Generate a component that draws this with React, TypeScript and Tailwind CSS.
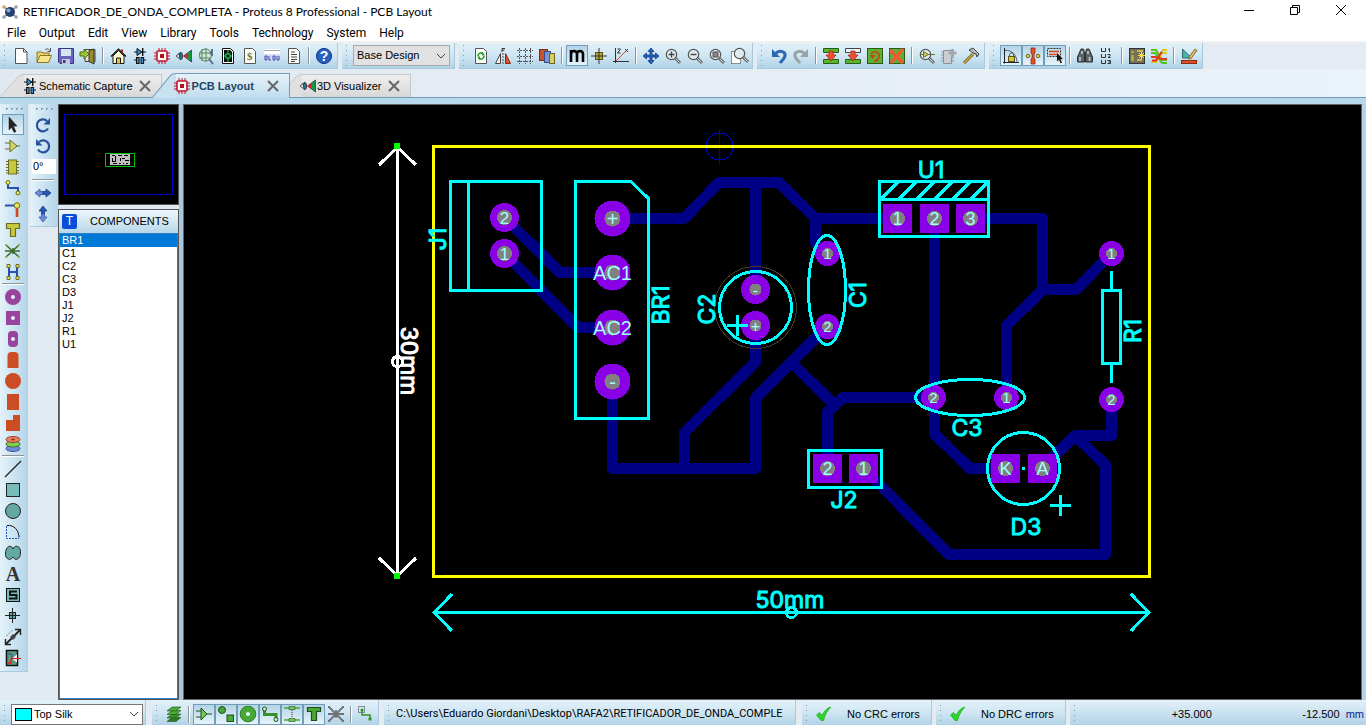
import type { ReactNode } from "react";

const lens = (
  <>
    <path d="M10 10l5 5" stroke="#6b6b6b" strokeWidth="3" />
    <path d="M10 10l4.5 4.5" stroke="#d8d8d8" strokeWidth="1" />
    <circle cx="6.5" cy="6.5" r="5.2" fill="#dfeaf2" stroke="#555" strokeWidth="1.2" />
  </>
);

const chip = (
  <>
    <path d="M5 0v16M8 0v16M11 0v16M0 5h16M0 8h16M0 11h16" stroke="#b81424" strokeWidth="1" />
    <rect x="3" y="3" width="10" height="10" rx="1" fill="#fff" stroke="#c4162a" strokeWidth="1.6" />
    <rect x="6" y="6" width="4" height="4" fill="#b0101f" />
  </>
);

const diode = (
  <>
    <path d="M2 4h12M2 12h3M11 12h3" stroke="#111" strokeWidth="1.2" />
    <path d="M5 0.5l5 3.5-5 3.5z" fill="#2f8fd0" stroke="#111" />
    <path d="M10.7 0v8" stroke="#111" strokeWidth="1.4" />
    <rect x="4.5" y="9.5" width="2.6" height="6" fill="#2f8fd0" stroke="#111" />
    <rect x="9" y="9.5" width="2.6" height="6" fill="#2f8fd0" stroke="#111" />
  </>
);

const eye = (
  <>
    <path d="M0 8l5-4M0 8l5 4M2 5l4 6" stroke="#555" strokeWidth="1" fill="none" />
    <ellipse cx="5" cy="8" rx="1.5" ry="3.4" fill="#2c7a9c" stroke="#222" strokeWidth="0.8" />
    <path d="M7.5 8l8-6v12z" fill="#149a3c" stroke="#115" strokeWidth="0.6" />
    <path d="M7.5 8l4-3v6z" fill="#d8212c" />
  </>
);

const page = <path d="M2.5 0.5h8l3 3v12h-11z" fill="#fcfcf8" stroke="#555" />;

const icons: Record<string, ReactNode> = {
  new: (
    <>
      <path d="M1.5 0.500h8l3.500 3.500v11.500h-11.500z" fill="#fdfdfd" stroke="#555" />
      <path d="M9.5 0.500v3.500h3.500" fill="none" stroke="#555" />
    </>
  ),
  open: (
    <>
      <path d="M1 14V4h5l1 1h6v3" fill="#e8d26a" stroke="#8a7420" />
      <path d="M1 14.5l3-7h11.5l-3 7z" fill="#f4e48c" stroke="#8a7420" />
      <path d="M9 2c2-2 4-1 5 1M14.500 0v3.500h-3" fill="none" stroke="#555" />
    </>
  ),
  save: (
    <>
      <path d="M0.500 0.500h15v15H2l-1.500-1.500z" fill="#6a64c0" stroke="#3b3684" />
      <rect x="3" y="1" width="10" height="7" fill="#d5e6ee" />
      <rect x="4" y="11" width="8" height="5" fill="#c6c6dc" />
      <rect x="5" y="12" width="2.500" height="3" fill="#3b3684" />
    </>
  ),
  exit: (
    <>
      <path d="M5 1.500h10v12H5z" fill="#e8e4c8" stroke="#444" />
      <path d="M9 2.500l5-1.500v15l-5-2.500z" fill="#9a8a2a" stroke="#333" />
      <path d="M0 4h4V1l5 5-5 5V8H0z" fill="#9ac73a" stroke="#4a6b14" />
    </>
  ),
  home: (
    <>
      <path d="M3 8v7.500h11V8L8.500 2.500z" fill="#fffbd0" stroke="#111" />
      <path d="M1 8.500L8.500 1 16 8.500" fill="none" stroke="#111" strokeWidth="1.200" />
      <path d="M12 1.500v3" stroke="#c01818" strokeWidth="2" />
      <path d="M6.500 15.500V10h4v5.500" fill="#f2c230" stroke="#111" />
    </>
  ),
  diode,
  chip,
  eye,
  gerber: (
    <>
      <circle cx="7.500" cy="7" r="6" fill="#cfe6d2" stroke="#5f7f68" />
      <path d="M4 1v12M8 0v14M1 5h13M1 10h12" stroke="#5b8a66" />
      <path d="M11 11l4 5M12 6l2-3M14 8V1" stroke="#4d6b8a" strokeWidth="1.800" />
    </>
  ),
  green: (
    <>
      <path d="M2.500 0.500h8l3 3v12h-11z" fill="#fff" stroke="#111" />
      <path d="M4 2h6l2 2v10H4z" fill="#111" />
      <path d="M8 2v12M4 8h8" stroke="#15e060" />
      <rect x="6" y="6" width="4" height="4" fill="#111" stroke="#15e060" />
    </>
  ),
  bill: (
    <>
      {page}
      <text x="5" y="12" fontSize="11" fontWeight="700" fontFamily="Liberation Serif, serif" fill="#857418">$</text>
    </>
  ),
  hex: (
    <>
      <rect x="0" y="1" width="16" height="5" fill="#fff" />
      <path d="M0 2.500h16" stroke="#9ab" />
      <rect x="0" y="6" width="16" height="7" fill="#d4dcf8" />
      <path d="M1 8h2v4h-2zM5 8v4h2M9 12V8h2v4zM13 8v4h2v-4" fill="none" stroke="#3a48a8" />
    </>
  ),
  doc: (
    <>
      {page}
      <path d="M5 4h4M5 6.500h6M5 9h6M5 11.500h6M5 13.500h4" stroke="#444" />
    </>
  ),
  help: (
    <>
      <circle cx="8" cy="8" r="7.600" fill="#2a5dc2" stroke="#173a86" />
      <text x="8" y="13" fontSize="14" fontWeight="700" textAnchor="middle" fontFamily="Liberation Sans, sans-serif" fill="#fff">?</text>
    </>
  ),
  refresh: (
    <>
      {page}
      <path d="M5 8c0-3 3-4 5-2M11 8c0 3-3 4-5 2" fill="none" stroke="#23a02e" strokeWidth="1.600" />
      <path d="M9 3.500v4h3zM7 12.500v-4H4z" fill="#23a02e" />
    </>
  ),
  mirror: (
    <>
      <path d="M0.500 15.500h5v-10z" fill="#f4f4f4" stroke="#444" />
      <path d="M15.500 15.500h-5v-10z" fill="#e05028" stroke="#8c2c10" />
      <path d="M8 5v11" stroke="#555" strokeDasharray="2 1" />
      <path d="M7 4V0.500h3M7 2.200h2.500" fill="none" stroke="#333" />
    </>
  ),
  grid: <path d="M0 2.500h16M0 8.500h16M0 13.500h16M2.500 0v16M8.500 0v16M13.500 0v16" stroke="#555" strokeDasharray="2 1" />,
  layers: (
    <>
      <rect x="0.500" y="1.500" width="8" height="11" fill="#c8542e" stroke="#703018" />
      <rect x="5.500" y="3.500" width="6" height="11" fill="#7a94dc" stroke="#38488c" />
      <rect x="10.500" y="5.500" width="5" height="10" fill="#dcd05c" stroke="#6c6420" />
    </>
  ),
  metric: <path d="M2 14V2M2 6c0-4 6-4 6 0v8M8 6c0-4 6-4 6 0v8" fill="none" stroke="#000" strokeWidth="2.600" />,
  origin: (
    <>
      <path d="M8 0v16M0 8h16" stroke="#333" />
      <rect x="4.500" y="4.500" width="7" height="7" fill="#b8a82c" stroke="#5c5410" />
      <path d="M8 4v8M4 8h8" stroke="#333" />
    </>
  ),
  axes: (
    <>
      <path d="M2.500 0v15M0 13.500h16" stroke="#333" />
      <path d="M3 13l9-9" stroke="#d8481c" />
      <path d="M4.500 1h3l-3 4h3M12 1l3 3M15 1l-3 3" fill="none" stroke="#333" />
    </>
  ),
  pan: <path d="M8 0l3 3.500H9v3.500h3.500V5L16 8l-3.500 3V9H9v3.500h2L8 16l-3-3.500h2V9H3.500v2L0 8l3.500-3v2H7V3.500H5z" fill="#2463c4" stroke="#123c80" strokeWidth="0.800" />,
  zoomIn: <>{lens}<path d="M3.500 6.500h6M6.500 3.500v6" stroke="#444" strokeWidth="1.400" /></>,
  zoomOut: <>{lens}<path d="M3.500 6.500h6" stroke="#444" strokeWidth="1.400" /></>,
  zoomAll: <>{lens}<rect x="4" y="4" width="5" height="5" fill="#888" stroke="#555" /></>,
  zoomArea: (
    <>
      <path d="M0.500 3.500h9v12h-9z" fill="#fff" stroke="#333" strokeDasharray="1 1" />
      <g transform="translate(2 -1)">{lens}</g>
    </>
  ),
  undo: (
    <>
      <path d="M4 6c5-5 11-2 10 2-.5 3-3 4-5 7" fill="none" stroke="#2a68b0" strokeWidth="3" />
      <path d="M1 1v8h8z" fill="#2a68b0" />
    </>
  ),
  redo: (
    <>
      <path d="M12 6C7 1 1 4 2 8c.500 3 3 4 5 7" fill="none" stroke="#9aa2a8" strokeWidth="3" />
      <path d="M15 1v8H7z" fill="#9aa2a8" />
    </>
  ),
  place: (
    <>
      <path d="M0.500 0.500h15v4h-15zM0.500 11.500h15v4h-15z" fill="#56b828" stroke="#2c5c18" />
      <path d="M6 3h4v4h3l-5 6-5-6h3z" fill="#ee5030" stroke="#a82810" strokeWidth="0.800" />
    </>
  ),
  move: (
    <>
      <path d="M0.500 0.500h15v4h-15z" fill="#e8f2f8" stroke="#444" />
      <path d="M0.500 11.500h15v4h-15z" fill="#56b828" stroke="#2c5c18" />
      <path d="M6 3h4v4h3l-5 6-5-6h3z" fill="#ee5030" stroke="#a82810" strokeWidth="0.800" />
    </>
  ),
  rotate: (
    <>
      <rect x="0.500" y="0.500" width="15" height="15" fill="#5fb030" stroke="#2c5c18" />
      <path d="M4 6c3-4 9-2 8 3-.500 3-3 4-5 4" fill="none" stroke="#c04818" strokeWidth="1.600" />
      <path d="M2.500 7l6 0-3 4z" fill="#c04818" />
    </>
  ),
  remove: (
    <>
      <rect x="0.500" y="0.500" width="15" height="15" fill="#5fb030" stroke="#2c5c18" />
      <path d="M1 2l13 13M14 1L2 15" stroke="#f05838" strokeWidth="3.400" />
    </>
  ),
  pick: (
    <>
      {lens}
      <path d="M1 6.500h4M9 6.500h7" stroke="#6c702c" />
      <path d="M4.500 3.500l5 3-5 3z" fill="#c8cc60" stroke="#6c702c" />
    </>
  ),
  newPkg: (
    <>
      <path d="M2.500 2.500h8v13h-8z" fill="#c8ced2" stroke="#8c9296" />
      <path d="M0 4h2M0 7h2M0 10h2M0 13h2M11 10h2M11 13h2" stroke="#8c9296" />
      <path d="M11.500 1v8M7.500 5h8" stroke="#a2a8ac" strokeWidth="3" />
    </>
  ),
  hammer: (
    <>
      <path d="M1 15L10 6" stroke="#6c5610" strokeWidth="3" />
      <path d="M1 15L10 6" stroke="#dcb840" strokeWidth="1.200" />
      <path d="M6 2l4-2 6 6-2 3-1-3-3-1z" fill="#b8bcc0" stroke="#444" />
    </>
  ),
  lock: (
    <>
      <path d="M1.500 0v15.500M0 14.500h16" stroke="#222" />
      <path d="M2 2.500c7-1 12 5 12 12" fill="none" stroke="#3a62a8" />
      <rect x="5.500" y="8.500" width="6" height="5" fill="#d4c440" stroke="#5c5410" />
      <path d="M6.500 8V6.500c0-2 4-2 4 0V8" fill="none" stroke="#5c5410" />
    </>
  ),
  neck: (
    <>
      <path d="M6 0h4v5l-1 1v4l1 1v5H6v-5l1-1V6L6 5z" fill="#e85028" stroke="#8c2c10" strokeWidth="0.800" />
      <circle cx="3" cy="8" r="1.800" fill="#dcd05c" stroke="#6c6420" />
      <circle cx="13" cy="8" r="1.800" fill="#dcd05c" stroke="#6c6420" />
    </>
  ),
  selTrack: (
    <>
      <path d="M0.500 0.500h13v8h-13z" fill="none" stroke="#333" strokeDasharray="2 1" />
      <path d="M2 3.500h10M2 6.500h8" stroke="#e04020" strokeWidth="1.600" />
      <path d="M10 5l6 6-2.500.200 1.500 3.500-1.500.600-1.500-3.500-2 1.700z" fill="#111" />
    </>
  ),
  find: (
    <>
      <path d="M4 1h2.500l1 4v9h-7V9zM12 1H9.500l-1 4v9h7V9z" fill="#5c6468" stroke="#2c3236" />
      <path d="M3 9v4M12.500 9v4M5 3v3M11 3v3" stroke="#c4ccd0" strokeWidth="1.600" />
    </>
  ),
  annotate: <path d="M2.500 0v3.500h4V0M9 1.500l1.500-1V4M2.500 6v3.500h4V6M8.500 6.500H11V8L9 9.500h2.500M2.500 12v3.500h4V12M8.500 12.500h3v3h-3M9.500 14h2" fill="none" stroke="#333" />,
  design: (
    <>
      <rect x="0.500" y="0.500" width="15" height="15" fill="#77705c" stroke="#333" />
      <path d="M3.500 3v2M3.500 7v6M8 3h6M8 12h5" stroke="#c8bc48" strokeWidth="2" />
      <path d="M12.500 4v7M9 7.500h7M10 5l5 5M15 5l-5 5" stroke="#f8e048" />
    </>
  ),
  route: (
    <>
      <path d="M0 2h5l6 10h5M0 5h4l7 10h5" fill="none" stroke="#58c020" strokeWidth="2" />
      <path d="M0 14h5l6-9h5M11 2h5" fill="none" stroke="#d8c820" strokeWidth="2" />
      <path d="M0 9h4l7 2h5M1 12.500h4l6-9" fill="none" stroke="#e03818" strokeWidth="2" />
    </>
  ),
  rules: (
    <>
      <path d="M1.500 1v9h9z" fill="#48b4a8" stroke="#2c6c68" />
      <path d="M8 9l6-8 2 1.500-6 8-2.500.500z" fill="#e0c060" stroke="#6c5020" strokeWidth="0.800" />
      <rect x="0.500" y="12.500" width="15" height="3" fill="#e05028" stroke="#8c2c10" />
    </>
  ),
  cursor: <path d="M4 0l8 9-3.500.300 2.500 5.200-2 1-2.500-5.200L4 13z" fill="#222" stroke="#222" strokeWidth="0.500" />,
  amp: (
    <>
      <path d="M0 5h5M0 11h5M11 8h4" stroke="#6c6c20" />
      <path d="M5 2l7 6-7 6z" fill="#d4d468" stroke="#6c6c20" />
    </>
  ),
  pkg: (
    <>
      <path d="M1 2.500h13M1 5.500h13M1 8.500h13M1 11.500h13M1 14h13" stroke="#6c6c20" />
      <rect x="3.500" y="1" width="8" height="14" fill="#c8c83c" stroke="#6c6c20" />
    </>
  ),
  track: (
    <>
      <path d="M3 3v5h10v5" fill="none" stroke="#2850b0" strokeWidth="2" />
      <circle cx="3" cy="2.500" r="2" fill="#e8e850" stroke="#6c6c20" />
      <circle cx="13" cy="13" r="2" fill="#e8e850" stroke="#6c6c20" />
    </>
  ),
  via: (
    <>
      <path d="M0 4.500h12" stroke="#2850b0" strokeWidth="2" />
      <path d="M12 6v10" stroke="#d04820" strokeWidth="2.600" />
      <circle cx="12" cy="4.500" r="2.800" fill="#e8e850" stroke="#6c6c20" />
    </>
  ),
  zone: <path d="M1.500 1.500h13v5h-4v8h-5v-8h-4z" fill="#c8c83c" stroke="#6c6c20" strokeWidth="1.200" />,
  rats: (
    <>
      <path d="M1 2l13 12M14 2L1 14M0 8h15M8 5v6" stroke="#3c6c28" strokeWidth="1.500" />
      <path d="M0 1h2v2H0zM13 1h2v2h-2zM0 13h2v2H0zM13 13h2v2h-2z" fill="#a0b030" />
    </>
  ),
  conn: (
    <>
      <path d="M4 3v10M4 8h8M12 3v10" fill="none" stroke="#2850b0" strokeWidth="2" />
      <path d="M2 0.500h3v3H2zM11 0.500h3v3h-3zM2 12.500h3v3H2zM11 12.500h3v3h-3z" fill="#e8e850" stroke="#6c6c20" />
    </>
  ),
  padRound: <><circle cx="8" cy="8" r="8" fill="#98449c" /><circle cx="8" cy="8" r="2" fill="#e4eef8" /></>,
  padSquare: <><rect x="1" y="1" width="14" height="14" fill="#98449c" /><circle cx="8" cy="8" r="2" fill="#e4eef8" /></>,
  padDil: <><rect x="3" y="0" width="10" height="16" rx="4" fill="#98449c" /><circle cx="8" cy="8" r="2" fill="#e4eef8" /></>,
  padEdge: <path d="M2.500 16V4q0-4 4-4h3q4 0 4 4v12z" fill="#cc4c24" />,
  padSmt: <circle cx="8" cy="8" r="8" fill="#cc4c24" />,
  padRect: <rect x="2" y="0" width="12" height="16" fill="#cc4c24" />,
  padPoly: <path d="M8 0h7v16H1V5h7z" fill="#cc4c24" />,
  stack: (
    <>
      <ellipse cx="8" cy="12.500" rx="7" ry="3" fill="#6c8ce0" stroke="#405090" />
      <ellipse cx="8" cy="8" rx="7" ry="3" fill="#80d050" stroke="#406c28" />
      <ellipse cx="8" cy="3.500" rx="7" ry="3" fill="#f08060" stroke="#904028" />
      <ellipse cx="8" cy="3.500" rx="2" ry="1" fill="#903018" />
    </>
  ),
  line: <path d="M0 16L16 0" stroke="#222" strokeWidth="1.300" />,
  box: <rect x="1.500" y="1.500" width="13" height="13" fill="#78bcb8" stroke="#222" />,
  circle: <circle cx="8" cy="8" r="7.500" fill="#64a8a4" stroke="#222" />,
  arc: (
    <>
      <path d="M1.500 2v12.500H14" fill="none" stroke="#1458c8" strokeDasharray="2 1" />
      <path d="M2 1.500c7-1 12 5 12 12" fill="none" stroke="#111" />
    </>
  ),
  path: <path d="M8 4c-2-5-7-3-7.500 4S6 16 8 12c2 4 7 3 7.500-4S10-1 8 4z" fill="#64a8a4" stroke="#222" />,
  text: <text x="8" y="14.500" fontSize="20" fontWeight="700" textAnchor="middle" fontFamily="Liberation Serif, serif" fill="#333">A</text>,
  symbol: (
    <>
      <rect x="1.500" y="1.500" width="13" height="13" fill="#78bcb8" stroke="#111" />
      <path d="M12 4.500H5v3.500h6.500v3.500H4" fill="none" stroke="#111" strokeWidth="2" />
    </>
  ),
  marker: (
    <>
      <rect x="4.500" y="4.500" width="6" height="6" fill="#64a8a4" stroke="#222" />
      <path d="M7.500 0v15M0 7.500h15" stroke="#222" />
    </>
  ),
  dimension: (
    <>
      <path d="M1 15L15 1" stroke="#222" strokeWidth="1.800" />
      <path d="M10 0.500h5.500V6M0.500 10v5.500H6" fill="none" stroke="#222" strokeWidth="1.400" />
      <path d="M5 8l3-3 3 3-3 3z" fill="#444" />
      <path d="M2 6.500l5-5" stroke="#222" strokeDasharray="1 2" />
    </>
  ),
  room: (
    <>
      <rect x="1.500" y="0.500" width="11" height="15" fill="#5c9c7c" stroke="#111" strokeWidth="1.500" />
      <path d="M3 4h4v5" fill="none" stroke="#1c50b8" />
      <path d="M3 13h3V9" fill="none" stroke="#e81818" strokeWidth="1.300" />
      <path d="M7 8.500l5-4v8z" fill="#fff" />
      <path d="M6 8.500h10" stroke="#e81818" strokeWidth="1.200" />
    </>
  ),
  rotCw: (
    <>
      <path d="M13 11.500A6 6 0 1 1 12 4" fill="none" stroke="#28509c" strokeWidth="2.200" />
      <path d="M15 1v6.500H8.500z" fill="#28509c" />
    </>
  ),
  rotCcw: (
    <>
      <path d="M3 11.500A6 6 0 1 0 4 4" fill="none" stroke="#28509c" strokeWidth="2.200" />
      <path d="M1 1v6.500H7.500z" fill="#28509c" />
    </>
  ),
  flipH: <><path d="M8 6.500H5V4L0 8l5 4V9.500h3z" fill="#6c8cdc" stroke="#3858a0" strokeWidth="0.800" /><path d="M8 6.500h3V4l5 4-5 4V9.500H8z" fill="#2858b0" stroke="#183c80" strokeWidth="0.800" /></>,
  flipV: <><path d="M6.500 8V5H4l4-5 4 5H9.500v3z" fill="#2858b0" stroke="#183c80" strokeWidth="0.800" /><path d="M6.500 8v3H4l4 5 4-5H9.500V8z" fill="#6c8cdc" stroke="#3858a0" strokeWidth="0.800" /></>,
  gLayers: (
    <>
      <path d="M1 15.500h9l5-4H6z" fill="#2c7c24" stroke="#1c5018" strokeWidth="0.600" />
      <path d="M1 12h9l5-4H6z" fill="#38902c" stroke="#1c5018" strokeWidth="0.600" />
      <path d="M1 8.500h9l5-4H6z" fill="#48ac38" stroke="#1c5018" strokeWidth="0.600" />
      <path d="M1 5h9l5-4H6z" fill="#48ac38" stroke="#1c5018" strokeWidth="0.600" />
    </>
  ),
  gAmp: <><path d="M0 5h5M0 11h5M11 8h5" stroke="#1c5018" /><path d="M5 2l6 6-6 6z" fill="#6cc850" stroke="#1c5018" /></>,
  gShapes: <><circle cx="4" cy="4" r="3.500" fill="#48a838" stroke="#1c5018" /><rect x="9" y="9" width="6.500" height="6.500" fill="#48a838" stroke="#1c5018" /></>,
  gPad: <><circle cx="8" cy="8" r="7.800" fill="#48a838" stroke="#2c7c24" /><circle cx="8" cy="8" r="2" fill="#e4f4f4" /></>,
  gTrack: <><path d="M2.500 4v4.500H14V13" fill="none" stroke="#389028" strokeWidth="3" /><circle cx="2.500" cy="3" r="2" fill="#d0f0c0" stroke="#1c5018" /><circle cx="14" cy="13.500" r="2" fill="#d0f0c0" stroke="#1c5018" /></>,
  gVia: <><path d="M0 2h16M0 14h16" stroke="#48a838" strokeWidth="1.500" /><path d="M5 0.500h6v3H5zM5 12.500h6v3H5z" fill="#78c860" stroke="#1c5018" strokeWidth="0.600" /><path d="M8 4v8" stroke="#333" strokeDasharray="1 1" /></>,
  gZone: <path d="M1.500 1.500h13v4h-4v9h-5v-9h-4z" fill="#48a838" stroke="#1c5018" strokeWidth="1.200" />,
  gRats: <path d="M1 1l14 14M15 1L1 15M0 8h16M8 4v8M0 1h2M14 1h2M0 15h2M14 15h2" stroke="#707478" strokeWidth="1.800" />,
  gSel: (
    <>
      <path d="M0.500 0.500h6v6h-6z" fill="none" stroke="#333" strokeDasharray="1 1" />
      <circle cx="4" cy="4" r="1.500" fill="#1c9c1c" />
      <path d="M4 5v4h8v4" fill="none" stroke="#389028" strokeWidth="1.500" />
      <path d="M10.500 11.500h3v3h-3z" fill="#389028" />
    </>
  ),
};

function Glyph({ name }: { name: string }) {
  return (
    <svg viewBox="0 0 16 16" className="size-4 shrink-0 overflow-visible" aria-hidden="true">
      {icons[name]}
    </svg>
  );
}

function ToolButton({ name, on = false }: { name: string; on?: boolean }) {
  return (
    <button
      type="button"
      aria-label={name}
      aria-pressed={on}
      className={
        on
          ? "flex h-[21px] w-[22px] shrink-0 items-center justify-center border border-[#6f9dba] bg-linear-to-b from-[#b4d4e6] to-[#e6f3fa]"
          : "flex h-[21px] w-[22px] shrink-0 items-center justify-center"
      }
    >
      <Glyph name={name} />
    </button>
  );
}

function Grip() {
  return (
    <span className="w-[11px] shrink-0 self-stretch pl-[3px]">
      <span className="block h-full w-[3px] bg-[radial-gradient(circle,#7f97a6_1px,#ffffff00_1px)] bg-[length:3px_5px]" />
    </span>
  );
}

function VSep() {
  return <span className="mx-[3px] h-[17px] w-[2px] shrink-0 border-l border-r border-l-[#8f9498] border-r-white" />;
}

function HSep() {
  return <span className="my-px h-[2px] w-[22px] shrink-0 border-t border-b border-t-[#8f9498] border-b-white" />;
}

const barClass =
  "flex shrink-0 items-center border-r border-b border-[#a9c9dd] bg-linear-to-b from-[#e3f1f9] via-[#cfe6f3] to-[#b1d3e7]";

const statusClass =
  "flex h-[25px] shrink-0 items-center border-r border-[#a9c9dd] bg-linear-to-b from-[#e3f1f9] via-[#cfe6f3] to-[#b1d3e7] pt-[3px]";

function Bar({ items, active = [] }: { items: string[]; active?: string[] }) {
  return (
    <div role="toolbar" className={barClass + " h-[26px] pr-[2px]"}>
      <Grip />
      {items.map((n, i) => (n === "|" ? <VSep key={i} /> : <ToolButton key={i} name={n} on={active.includes(n)} />))}
    </div>
  );
}

function Tab({ label, icon, active = false }: { label: string; icon: ReactNode; active?: boolean }) {
  const fill = active ? "#c9e2f1" : "#e0e0e0";
  const edge = active ? "#6f9dba" : "#c4c8cc";
  return (
    <div className={active ? "relative z-10 -mb-px -ml-[10px] flex h-[25px] items-stretch" : "flex h-[23px] items-stretch"}>
      <svg viewBox="0 0 24 24" preserveAspectRatio="none" className="h-full w-6" aria-hidden="true">
        <path d="M0 24L18 3Q20 0.500 24 0.500V24z" fill={fill} />
        <path d="M0 24L18 3Q20 0.500 24 0.500" fill="none" stroke={edge} />
      </svg>
      <div
        className={
          active
            ? "flex items-center gap-[2px] border-t border-r border-[#6f9dba] bg-linear-to-b from-[#e6f3fa] to-[#bfdcee] pr-[10px] font-bold text-[#1f4566]"
            : "flex items-center gap-px border-t border-r border-[#c4c8cc] bg-linear-to-b from-[#eeeeee] to-[#d8d8d8] pr-[10px]"
        }
      >
        <svg viewBox="0 0 16 16" className="-ml-[2px] size-4" aria-hidden="true">{icon}</svg>
        <button type="button">{label}</button>
        <button type="button" aria-label={"Close " + label} className={active ? "ml-[11px]" : "ml-[5px]"}>
          <svg viewBox="0 0 12 12" className="size-3" aria-hidden="true">
            <path d="M1 1l10 10M11 1L1 11" stroke="#666" strokeWidth="2" />
          </svg>
        </button>
      </div>
    </div>
  );
}

type PadSpec = { x: number; y: number; r: number; hole: number; t: string; fs: number; square?: boolean };

const pads: PadSpec[] = [
  { x: 504.5, y: 217.5, r: 14.5, hole: 7.5, t: "2", fs: 17 },
  { x: 504.5, y: 253.5, r: 14.5, hole: 7.5, t: "1", fs: 17 },
  { x: 612.5, y: 218.5, r: 18, hole: 8, t: "+", fs: 20 },
  { x: 612.5, y: 272.5, r: 18, hole: 8, t: "AC1", fs: 20 },
  { x: 612.5, y: 327.5, r: 18, hole: 8, t: "AC2", fs: 20 },
  { x: 612.5, y: 381.5, r: 18, hole: 8, t: "-", fs: 20 },
  { x: 755.5, y: 289.5, r: 14.5, hole: 6, t: "-", fs: 16 },
  { x: 755.5, y: 325.5, r: 14.5, hole: 6, t: "+", fs: 16 },
  { x: 827.5, y: 253.5, r: 12.5, hole: 5.5, t: "1", fs: 15 },
  { x: 827.5, y: 326.5, r: 12.5, hole: 5.5, t: "2", fs: 15 },
  { x: 897.5, y: 218.5, r: 14.5, hole: 7.5, t: "1", fs: 18, square: true },
  { x: 934.5, y: 218.5, r: 14.5, hole: 7.5, t: "2", fs: 18, square: true },
  { x: 970.5, y: 218.5, r: 14.5, hole: 7.5, t: "3", fs: 18, square: true },
  { x: 933.5, y: 397.5, r: 12.5, hole: 5.5, t: "2", fs: 15 },
  { x: 1006.5, y: 397.5, r: 12.5, hole: 5.5, t: "1", fs: 15 },
  { x: 1111.5, y: 253.5, r: 12.5, hole: 5.5, t: "1", fs: 15 },
  { x: 1111.5, y: 399.5, r: 12.5, hole: 5.5, t: "2", fs: 15 },
  { x: 827.5, y: 468.5, r: 14.5, hole: 7.5, t: "2", fs: 18, square: true },
  { x: 863.5, y: 468.5, r: 14.5, hole: 7.5, t: "1", fs: 18, square: true },
  { x: 1005.5, y: 468.5, r: 14.5, hole: 7.5, t: "K", fs: 18, square: true },
  { x: 1042.5, y: 468.5, r: 14.5, hole: 7.5, t: "A", fs: 18, square: true },
];

const tracks = [
  "M504.5 217.5L560 272.500H612",
  "M504.5 253.500L578 327.500H612",
  "M612 218.500H684L719 182.500H779L815.500 218.500H897",
  "M755.500 182.500V290",
  "M815.500 218.500V243L827 253",
  "M612.500 381V468.500H755.500V398L827 326.500",
  "M755.500 326V362L684 433V468",
  "M791 362L835 405.500L827.500 412V468M835 405L843 397.500H933",
  "M934.500 218V434L970 468.500H1005",
  "M970 218.500H1042.500V290L1006.500 325.500V398",
  "M1042 289.500H1076L1111 254",
  "M1111.500 400V435.500H1075L1042 468",
  "M1075 435.500L1105.500 465V554.500H949L863 468",
];

const labels: { t: string; x: number; y: number; rot: number }[] = [
  { t: "U1", x: 931, y: 178, rot: 0 },
  { t: "C3", x: 967, y: 436, rot: 0 },
  { t: "J2", x: 844, y: 508, rot: 0 },
  { t: "D3", x: 1026, y: 535, rot: 0 },
  { t: "J1", x: 446, y: 239, rot: -90 },
  { t: "BR1", x: 669, y: 305, rot: -90 },
  { t: "C2", x: 715, y: 309, rot: -90 },
  { t: "C1", x: 866, y: 295, rot: -90 },
  { t: "R1", x: 1141, y: 331, rot: -90 },
  { t: "50mm", x: 790, y: 608, rot: 0 },
];

function Board() {
  return (
    <svg
      viewBox="184 105 1177 594"
      className="block h-full w-full"
      shapeRendering="crispEdges"
      fontFamily="Liberation Sans, sans-serif"
      role="img"
      aria-label="PCB layout"
    >
      <g fill="none" stroke="#000084" strokeWidth="11" strokeLinejoin="round" strokeLinecap="round">
        {tracks.map((d) => (
          <path key={d} d={d} />
        ))}
      </g>
      <g fill="none" stroke="#0000c0">
        <circle cx="719.500" cy="146.500" r="13.500" />
        <path d="M719.500 130v35" />
      </g>
      <rect x="433.500" y="146.500" width="716" height="430" fill="none" stroke="#ff0" strokeWidth="3" />
      {pads.map((p, i) => (
        <g key={i}>
          {p.square ? (
            <rect x={p.x - p.r} y={p.y - p.r} width={p.r * 2} height={p.r * 2} fill="#8a00e6" />
          ) : (
            <circle cx={p.x} cy={p.y} r={p.r} fill="#8a00e6" />
          )}
          <circle cx={p.x} cy={p.y} r={p.hole} fill="#808080" />
        </g>
      ))}
      <g fill="none" stroke="#0ff" strokeWidth="3">
        <path d="M450.500 181.500h91v109h-91zM468.500 181v109" />
        <path d="M575.500 181.500H631L648.500 198.500V418.500H575.500z" />
        <circle cx="755.500" cy="307.500" r="36" />
        <path d="M727 325.500h21M737.500 315v21" />
        <ellipse cx="827" cy="290" rx="18.500" ry="54.500" />
        <ellipse cx="970" cy="397.500" rx="54.500" ry="18" />
        <path d="M879.500 181.500h109v55h-109zM879 199.500h110" />
        <path d="M881 199l17-17M899 199l17-17M917 199l17-17M935 199l17-17M953 199l17-17M971 199l17-17" />
        <rect x="808.500" y="450.500" width="73" height="37" />
        <circle cx="1023.500" cy="468.500" r="36" />
        <path d="M1022 468.500h3M1050 505.500h21M1060.500 495v21" />
        <path d="M1102.500 290.500h18v73h-18zM1111.500 271v19M1111.500 364v19" />
        <path d="M433 612.500H1150M452 594l-18 18.500 18 18.500M1131 594l18 18.500-18 18.500" />
        <circle cx="791.500" cy="612.500" r="5" />
      </g>
      <circle cx="755.500" cy="307.500" r="41" fill="none" stroke="#403c28" />
      <g fill="none" stroke="#fff" strokeWidth="3">
        <path d="M397.500 147V577M379 165l18.500-18 18.500 18M379 558l18.500 18 18.500-18" />
        <circle cx="397.500" cy="361.500" r="5" />
      </g>
      <path d="M394 143h6v6h-6zM394 573h6v6h-6z" fill="#0f0" />
      {pads.map((p, i) => (
        <text key={i} x={p.x} y={p.y + Math.round(p.fs * 0.36)} fontSize={p.fs} textAnchor="middle" fill="#a0ffff">
          {p.t}
        </text>
      ))}
      <g fill="#0ff" stroke="#0ff" strokeWidth="1" fontFamily="Inter, sans-serif" fontSize="23" textAnchor="middle">
        {labels.map((l) => (
          <text key={l.t} transform={`translate(${l.x} ${l.y}) rotate(${l.rot})`}>
            {l.t}
          </text>
        ))}
        <text transform="translate(401 361) rotate(90)" fill="#fff" stroke="#fff">
          30mm
        </text>
      </g>
    </svg>
  );
}

const modes = ["cursor", "amp", "pkg", "track", "via", "zone", "rats", "conn", "|", "padRound", "padSquare", "padDil", "padEdge", "padSmt", "padRect", "padPoly", "stack", "|", "line", "box", "circle", "arc", "path", "text", "symbol", "marker", "dimension", "room"];
const menus = ["File", "Output", "Edit", "View", "Library", "Tools", "Technology", "System", "Help"];
const parts = ["BR1", "C1", "C2", "C3", "D3", "J1", "J2", "R1", "U1"];

function SideGrip() {
  return <span className="mx-[2px] mt-[2px] mb-[3px] h-[5px] self-stretch bg-[radial-gradient(circle,#7f97a6_1px,#ffffff00_1px)] bg-[length:5px_5px]" />;
}

function Status({ label }: { label: string }) {
  return (
    <div className={statusClass + " mr-1 w-[130px]"}>
      <Grip />
      <svg viewBox="0 0 16 16" className="ml-[3px] size-4" aria-hidden="true">
        <path d="M0.500 9l3-2.500 2.500 3C8 5 11 2 15 1c-4 4-6 8-7.500 13.500H5z" fill="#2fd42f" stroke="#1fb41f" strokeWidth="0.800" />
      </svg>
      <span className="ml-[15px] whitespace-nowrap">{label}</span>
    </div>
  );
}

export default function App() {
  return (
    <div className="flex h-screen flex-col overflow-hidden bg-[#e4ebf2] font-['Liberation_Sans',sans-serif] text-[11px] text-black">
      <header className="bg-white font-['Roboto','Noto_Sans',sans-serif] text-[12px]">
        <div className="flex h-[23px] items-center pl-[2px]">
          <svg viewBox="0 0 16 16" className="mr-[5px] size-4" aria-hidden="true">
            <path d="M1 2l14 12M15 2L1 14" stroke="#7a8ba0" strokeWidth="1.500" />
            <circle cx="8" cy="8" r="5" fill="#24406c" />
            <circle cx="6.500" cy="6.500" r="2" fill="#88a8d4" />
            <circle cx="2" cy="3" r="1.800" fill="#e0a070" />
            <circle cx="14" cy="3" r="1.800" fill="#98a4b0" />
            <circle cx="2" cy="13" r="1.800" fill="#98a4b0" />
            <circle cx="14" cy="13" r="1.800" fill="#98a4b0" />
          </svg>
          <h1 className="flex-1 font-['Lato',sans-serif] whitespace-nowrap">RETIFICADOR_DE_ONDA_COMPLETA - Proteus 8 Professional - PCB Layout</h1>
          <div className="flex self-start">
            {["M0 5.500h10", "M2.500 2.500v-2h7v7h-2M0.500 2.500h7v7h-7z", "M0 0l10 10M10 0L0 10"].map((d, i) => (
              <button key={d} type="button" aria-label={["Minimize", "Restore", "Close"][i]} className="flex h-[20px] w-[46px] items-center justify-center">
                <svg viewBox="0 0 10 10" className="size-[10px] overflow-visible" aria-hidden="true">
                  <path d={d} fill="none" stroke="#000" />
                </svg>
              </button>
            ))}
            <span className="w-[2px]" />
          </div>
        </div>
        <nav className="flex h-[18px] items-center gap-[13px] pt-px pl-[7px]">
          {menus.map((m) => (
            <button key={m} type="button">{m}</button>
          ))}
        </nav>
      </header>

      <div className="flex h-[28px] shrink-0 gap-1 border-t-2 border-[#f0f0f0]">
        <Bar items={["new", "open", "save", "exit", "|", "home", "diode", "chip", "eye", "gerber", "green", "bill", "hex", "doc", "|", "help"]} />
        <div className={barClass + " h-[26px] w-[113px]"}>
          <Grip />
          <label className="relative flex items-center">
            <select aria-label="Variant" className="h-[21px] w-[97px] appearance-none border border-[#a8a8a8] bg-[#e1e1e1] pl-[3px]">
              <option>Base Design</option>
            </select>
            <svg viewBox="0 0 10 6" className="pointer-events-none absolute right-[4px] w-[10px]" aria-hidden="true">
              <path d="M1 1l4 4 4-4" fill="none" stroke="#444" />
            </svg>
          </label>
        </div>
        <Bar items={["refresh", "mirror", "grid", "layers", "|", "metric", "origin", "axes", "|", "pan", "zoomIn", "zoomOut", "zoomAll", "zoomArea"]} active={["metric"]} />
        <Bar items={["undo", "redo", "|", "place", "move", "rotate", "remove", "|", "pick", "newPkg", "hammer"]} />
        <Bar items={["lock", "neck", "selTrack", "|", "find", "annotate", "|", "design", "route", "|", "rules"]} active={["lock", "neck", "selTrack"]} />
      </div>

      <div className="flex h-[29px] shrink-0 items-end border-b border-[#6f9dba] bg-linear-to-r from-[#e1e8ef] to-[#eaf2fa]">
        <Tab label="Schematic Capture" icon={diode} />
        <Tab label="PCB Layout" icon={chip} active />
        <div className="-ml-3">
          <Tab label="3D Visualizer" icon={eye} />
        </div>
      </div>
      <div className="h-[6px] shrink-0 bg-[#b8d8eb]" />

      <main className="flex min-h-0 flex-1">
        <div className="flex shrink-0 items-start gap-[2px] bg-[#e2eaf1]">
          <div role="toolbar" className="flex w-[28px] flex-col border-b border-[#a9c9dd] bg-linear-to-r from-[#e4f2f9] to-[#b3d5e9] pb-[3px] pl-[2px]">
            <SideGrip />
            {modes.map((n, i) => (n === "|" ? <HSep key={i} /> : <ToolButton key={i} name={n} on={n === "cursor"} />))}
          </div>
          <div role="toolbar" className="flex w-[28px] flex-col items-start border-b border-[#a9c9dd] bg-linear-to-r from-[#e4f2f9] to-[#b3d5e9] pb-[2px] pl-[2px]">
            <SideGrip />
            <ToolButton name="rotCw" />
            <ToolButton name="rotCcw" />
            <input aria-label="Angle" defaultValue="0°" className="mt-[3px] mb-[4px] h-[15px] w-[24px] bg-white pl-px text-[11px]" />
            <HSep />
            <ToolButton name="flipH" />
            <ToolButton name="flipV" />
          </div>
        </div>

        <aside className="flex w-[125px] shrink-0 flex-col bg-[#a9c6da] pr-[4px]">
          <div className="h-[101px] border border-[#555] bg-black">
            <svg viewBox="59 105 119 99" className="block size-full" shapeRendering="crispEdges" aria-hidden="true">
              <rect x="64.500" y="114.500" width="108" height="80" fill="none" stroke="#0000c8" />
              <rect x="105.500" y="153.500" width="29" height="13" fill="none" stroke="#00c000" />
              <rect x="110" y="154" width="20" height="11" fill="#c0c0c0" />
              <path d="M112 155.500h3M112.500 158v4M115.500 156v5h-3M118 155.500h4M124 155.500h4M120.500 158v3M122 158.500h3M125 160.500h4M113 163.500h4M119 163.500h2M123 163.500h1M126 163.500h2" stroke="#000" fill="none" />
            </svg>
          </div>
          <div className="h-[4px] bg-[#dce9f2]" />
          <section className="flex min-h-0 flex-1 flex-col border border-[#555] bg-white">
            <h2 className="flex h-[23px] shrink-0 items-center bg-linear-to-b from-[#eef6fb] to-[#b7d7ea] pl-[3px]">
              <button type="button" aria-label="Pick" className="h-[15px] w-[15px] rounded-[2px] bg-[#0b4fd8] text-[12px] leading-[15px] text-white">T</button>
              <span className="flex-1 pl-[13px]">COMPONENTS</span>
            </h2>
            <ul className="flex-1 border border-[#2d7fc4]">
              {parts.map((p, i) => (
                <li key={p} className={i === 0 ? "h-[13px] bg-[#0078d7] pl-[2px] leading-[13px] text-white" : "h-[13px] pl-[2px] leading-[13px]"}>
                  {p}
                </li>
              ))}
            </ul>
          </section>
        </aside>

        <div className="min-w-0 flex-1 border border-[#666] bg-black">
          <Board />
        </div>
        <div className="w-[4px] shrink-0 bg-[#b5d3e4]" />
      </main>

      <footer className="flex h-[25px] shrink-0 bg-[#e4ebf2]">
        <div className={statusClass + " mr-[6px] w-[146px]"}>
          <Grip />
          <label className="relative flex items-center">
            <select aria-label="Layer" className="h-[21px] w-[132px] appearance-none border border-[#777] bg-white pl-[22px]">
              <option>Top Silk</option>
            </select>
            <span className="absolute left-[4px] h-[13px] w-[17px] border border-black bg-[#00ffff]" />
            <svg viewBox="0 0 10 6" className="pointer-events-none absolute right-[4px] w-[10px]" aria-hidden="true">
              <path d="M1 1l4 4 4-4" fill="none" stroke="#444" />
            </svg>
          </label>
        </div>
        <div role="toolbar" className={statusClass + " mr-[5px] w-[227px]"}>
          <Grip />
          <ToolButton name="gLayers" />
          <VSep />
          {["gAmp", "gShapes", "gPad", "gTrack", "gVia", "gZone"].map((n) => (
            <ToolButton key={n} name={n} on />
          ))}
          <ToolButton name="gRats" />
          <VSep />
          <ToolButton name="gSel" />
        </div>
        <div className={statusClass + " mr-[6px] w-[412px]"}>
          <Grip />
          <span className="whitespace-nowrap pl-px font-['Roboto',sans-serif]">C:\Users\Eduardo Giordani\Desktop\RAFA2\RETIFICADOR_DE_ONDA_COMPLE</span>
        </div>
        <Status label="No CRC errors" />
        <Status label="No DRC errors" />
        <div className="flex min-w-0 flex-1 items-center bg-linear-to-b from-[#e3f1f9] to-[#b1d3e7] pt-[3px] pr-[2px]">
          <Grip />
          <span className="flex-1" />
          <span className="w-[134px] text-right">+35.000</span>
          <span className="w-[131px] text-right">-12.500</span>
          <span className="w-[25px] text-right text-[#0a1a8c]">mm</span>
        </div>
      </footer>
    </div>
  );
}
